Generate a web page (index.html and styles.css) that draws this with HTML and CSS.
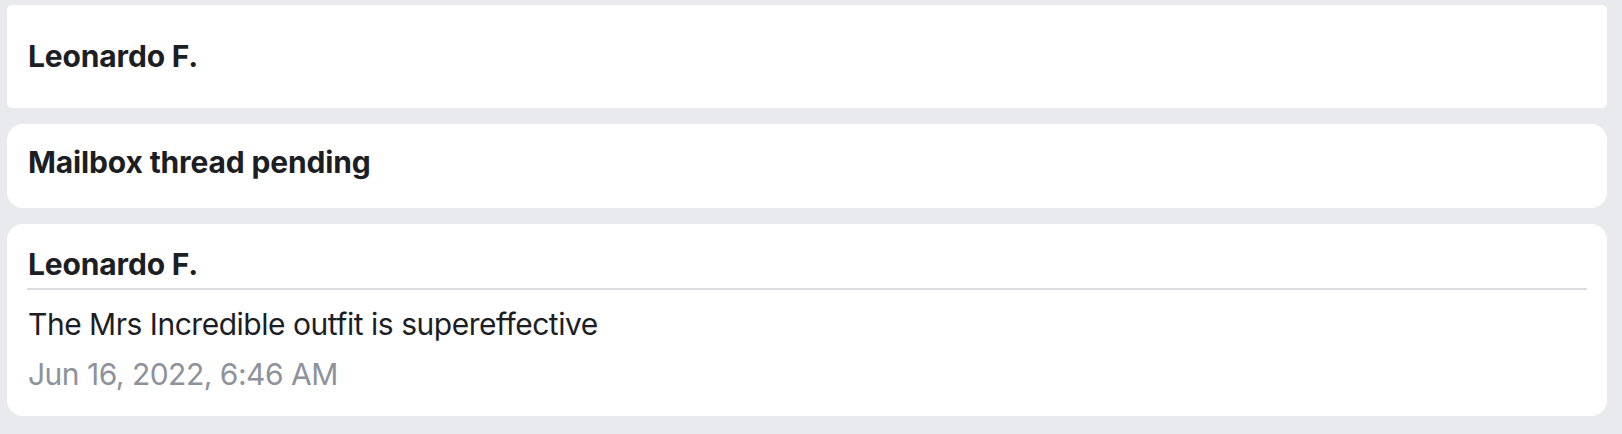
FILE: index.html
```html
<!DOCTYPE html>
<html>
<head>
<meta charset="utf-8">
<link rel="stylesheet" href="styles.css">
</head>
<body>
<div class="feed">
  <div class="card card-top">
    <div class="title">Leonardo F.</div>
  </div>
  <div class="card card-status">
    <div class="title">Mailbox thread pending</div>
  </div>
  <div class="card card-message">
    <div class="title title-ruled">Leonardo F.</div>
    <div class="body">The Mrs Incredible outfit is supereffective</div>
    <div class="date">Jun 16, 2022, 6:46 AM</div>
  </div>
</div>
</body>
</html>
```

FILE: styles.css
```css
html, body {
  margin: 0;
  padding: 0;
  background: #e9eaee;
}
body {
  font-family: Inter, "Noto Sans", "Liberation Sans", sans-serif;
  color: #1c1e24;
  height: 434px;
  overflow: hidden;
}
.feed {
  display: flex;
  flex-direction: column;
  gap: 16px;
  padding: 5px 15px 0 7px;
}
.card {
  background: #ffffff;
  border-radius: 16px;
  padding: 20px 20px;
}
.card-top {
  border-radius: 5px;
  padding: 33px 20px 34px;
}
.card-status {
  padding: 20px 20px 28px;
}
.card-message {
  padding: 22px 20px 24px;
}
.title {
  font-size: 30px;
  line-height: 36px;
  font-weight: 700;
  letter-spacing: -0.15px;
  padding-left: 1px;
}
.title-ruled {
  padding-bottom: 6px;
  border-bottom: 2px solid #dcdce1;
}
.body {
  font-size: 30px;
  line-height: 36px;
  letter-spacing: -0.48px;
  margin-top: 16px;
  padding-left: 1px;
}
.date {
  font-size: 30px;
  line-height: 36px;
  letter-spacing: -0.5px;
  margin-top: 14px;
  color: #8d929b;
  padding-left: 1px;
}
```
